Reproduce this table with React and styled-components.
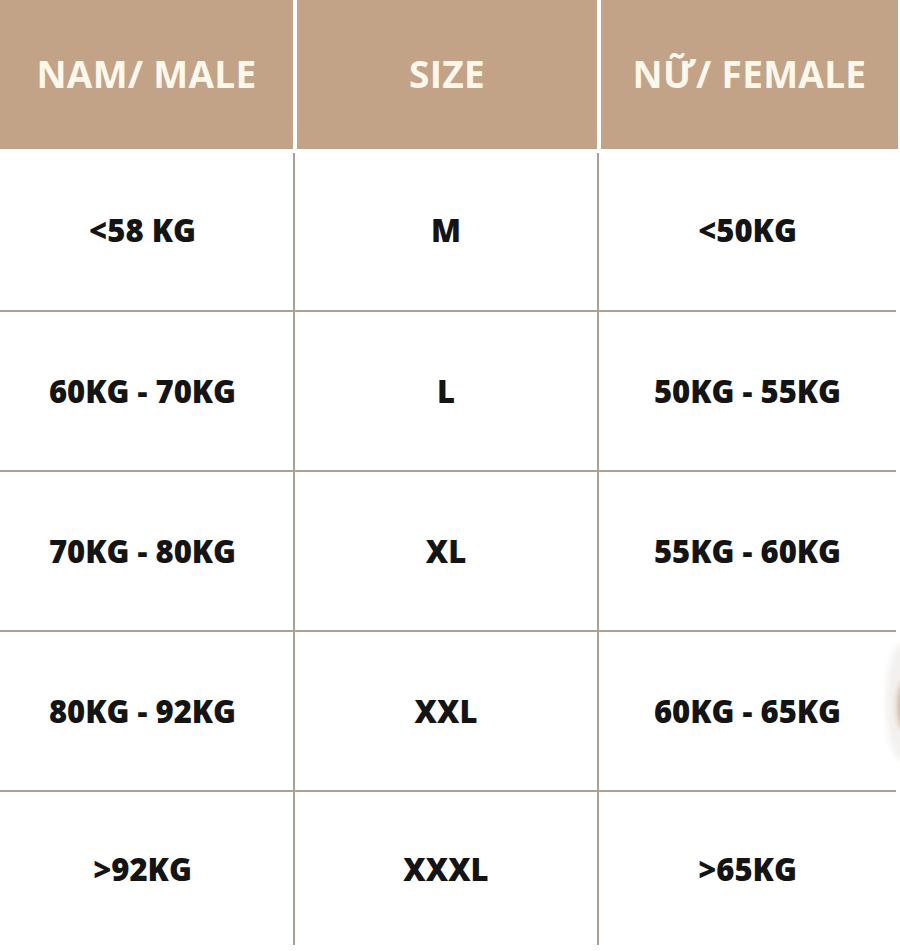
import React from "react";
import styled, { createGlobalStyle } from "styled-components";

const Global = createGlobalStyle`
  html, body { margin: 0; padding: 0; background: #ffffff; }
  body { font-family: "Open Sans", "Liberation Sans", sans-serif; }
`;

const Page = styled.div`
  position: relative;
  width: 900px;
  height: 951px;
  overflow: hidden;
  background: #ffffff;
`;

const Header = styled.div`
  display: grid;
  grid-template-columns: 293px 300px 297px;
  column-gap: 4px;
  height: 149px;
  margin-right: 2px;
`;

const HeadCell = styled.div`
  display: flex;
  align-items: center;
  justify-content: center;
  padding-bottom: 2px;
  background: #c2a387;
  color: #fdf7ec;
  font-weight: 700;
  font-size: 37px;
  letter-spacing: 0.3px;
`;

const Body = styled.div`
  display: grid;
  grid-template-columns: 293px 302px 1fr;
  grid-template-rows: 157px repeat(3, 158px) 153px;
  column-gap: 2px;
  row-gap: 2px;
  width: 896px;
  margin-top: 4px;
  background: #aba093;
`;

const Cell = styled.div`
  display: flex;
  align-items: center;
  justify-content: center;
  background: #ffffff;
  color: #141414;
  font-weight: 800;
  font-size: 31px;
  padding-bottom: ${(p) => (p.$first ? "4px" : "0")};
  padding-right: ${(p) => (p.$col === 0 ? "8px" : "0")};
`;

const Photo = styled.svg`
  position: absolute;
  right: 0;
  top: 640px;
  width: 30px;
  height: 130px;
`;

const rows = [
  ["<58 KG", "M", "<50KG"],
  ["60KG - 70KG", "L", "50KG - 55KG"],
  ["70KG - 80KG", "XL", "55KG - 60KG"],
  ["80KG - 92KG", "XXL", "60KG - 65KG"],
  [">92KG", "XXXL", ">65KG"],
];

export default function App() {
  return (
    <Page>
      <Global />
      <Header>
        <HeadCell>NAM/ MALE</HeadCell>
        <HeadCell>SIZE</HeadCell>
        <HeadCell>NỮ/ FEMALE</HeadCell>
      </Header>
      <Body>
        {rows.map((r, i) =>
          r.map((t, j) => (
            <Cell key={`${i}-${j}`} $first={i === 0} $col={j}>
              {t}
            </Cell>
          ))
        )}
      </Body>
      <Photo viewBox="0 0 30 130">
        <defs>
          <filter id="blur" x="-50%" y="-50%" width="200%" height="200%">
            <feGaussianBlur stdDeviation="3" />
          </filter>
        </defs>
        <ellipse cx="32" cy="62" rx="16" ry="58" fill="#f3f1ef" filter="url(#blur)" />
        <ellipse cx="35" cy="66" rx="7" ry="24" fill="#c8a88e" filter="url(#blur)" />
      </Photo>
    </Page>
  );
}
